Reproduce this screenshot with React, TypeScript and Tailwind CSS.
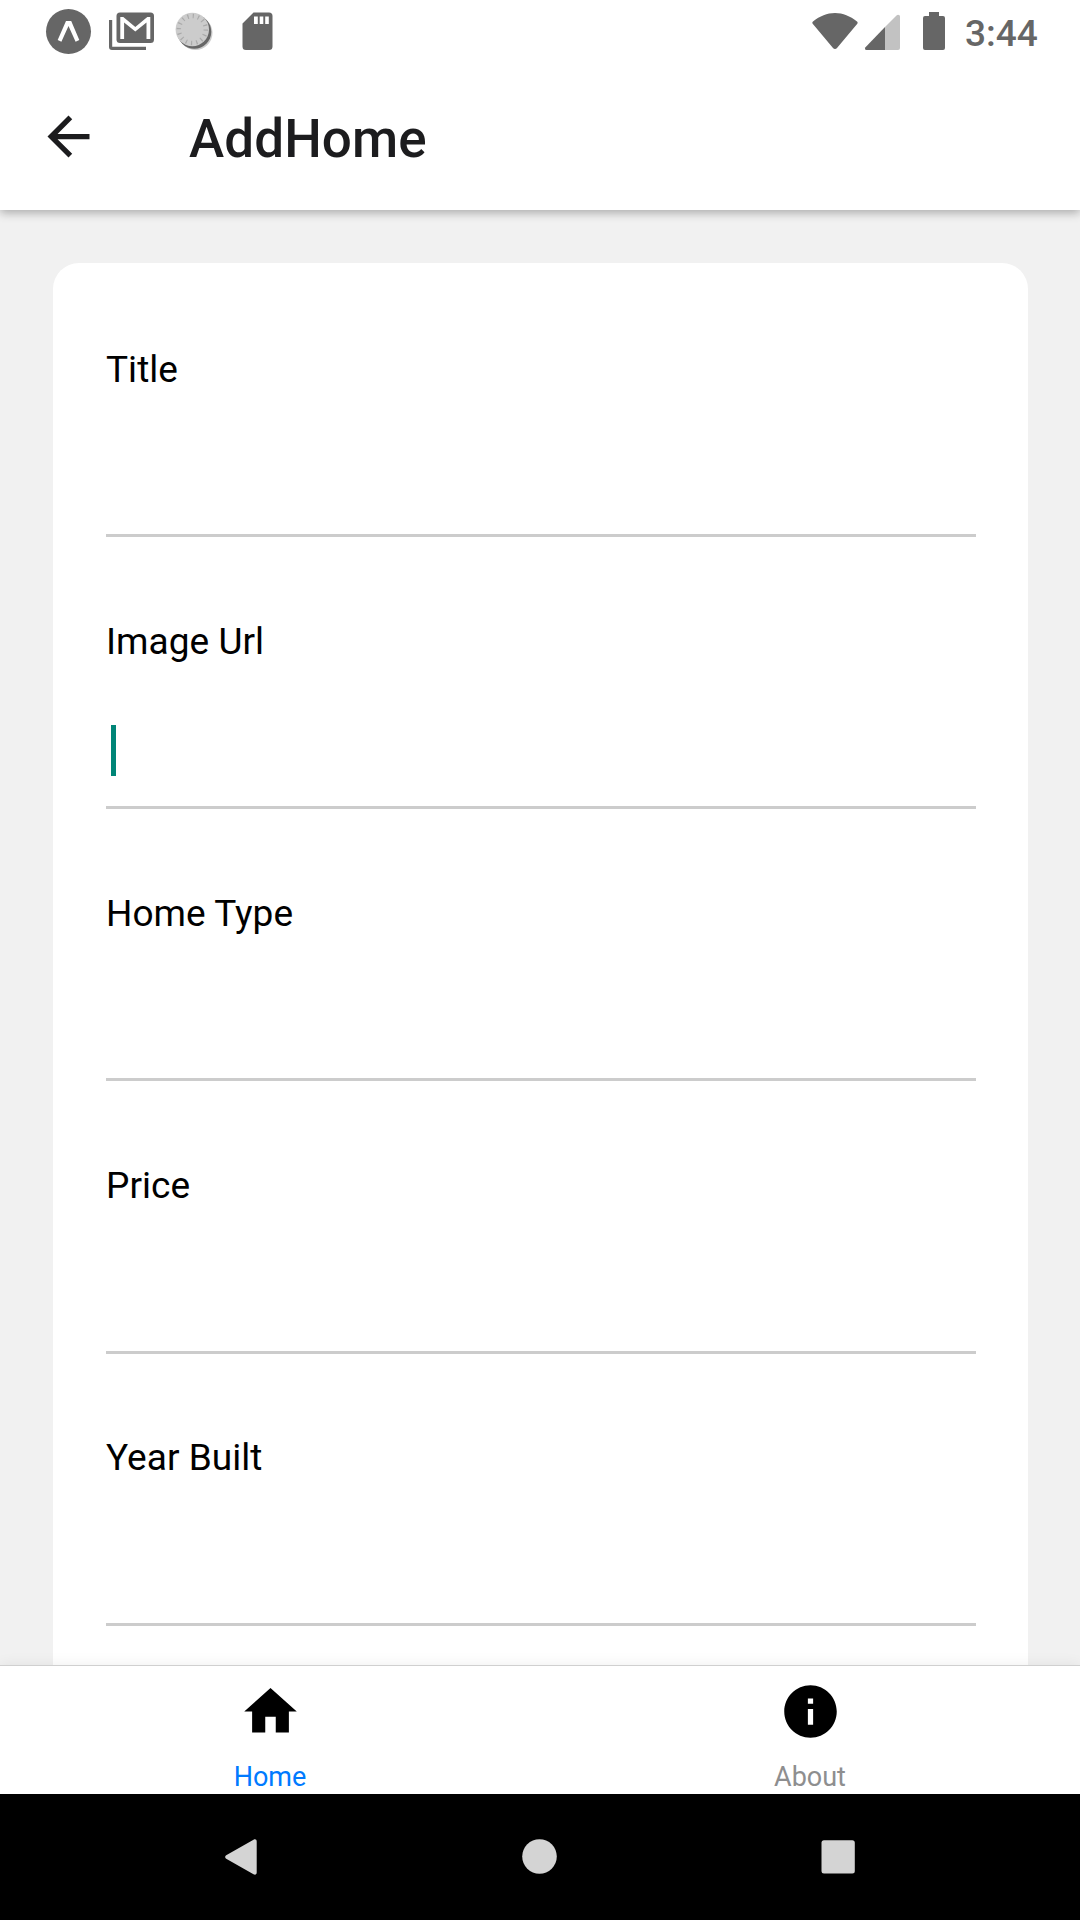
import React from "react";

const fields = ["Title", "Image Url", "Home Type", "Price", "Year Built"];

function StatusBar() {
  return (
    <div className="flex h-[63px] shrink-0 items-start justify-between">
      <svg width="300" height="63" viewBox="0 0 300 63" className="block shrink-0">
        <circle cx="68.5" cy="31.5" r="22.5" fill="#666" />
        <path d="M57.700 40L66 21h5.200L79.300 40l-3.700 1.700L68.500 26 61.400 41.700Z" fill="#fff" />
        <path d="M109 20h3.200v26.800H146V50h-34a3 3 0 0 1-3-3Z" fill="#666" />
        <rect x="116.500" y="12.500" width="37.500" height="30.500" rx="3.500" fill="#666" />
        <path d="M120.300 39V17h3l12 10 12-10h3v22h-3.800V22.500l-11.200 9-11.200-9V39Z" fill="#fff" />
        <circle cx="195.500" cy="33" r="17" fill="#ccc" />
        <circle cx="194.300" cy="31.700" r="17" fill="#666" />
        <circle cx="192.300" cy="29.500" r="16.700" fill="#ccc" />
        <circle cx="192.300" cy="29.500" r="13.500" fill="none" stroke="#aaa" strokeWidth="4.500" strokeDasharray="1.200 4.102" />
        <path d="M253.500 12.500H269a3.500 3.500 0 0 1 3.500 3.500v30.500A3.500 3.500 0 0 1 269 50h-23a3.500 3.500 0 0 1-3.500-3.500V23.500Z" fill="#666" />
        <path d="M254 16.500h3.800V24H254ZM259.700 16.500h3.600V24h-3.600ZM265.200 16.500h3.600V24h-3.600Z" fill="#fff" />
      </svg>
      <div className="flex">
        <svg width="150" height="63" viewBox="806 0 150 63" className="block shrink-0">
          <path d="M813 21.500C820 16 827 13 835 13s15 3 22 8.500c.8.700.8 1.500.3 2.200L837 48c-1 1.200-3 1.200-4 0L812.700 23.700c-.5-.7-.5-1.500.3-2.200Z" fill="#666" />
          <path d="M885 27l11.500-11.500c1.500-1.500 3.500-.5 3.500 1V48a2 2 0 0 1-2 2h-13Z" fill="#c2c2c2" />
          <path d="M885 27v23h-18.500c-1.500 0-2-1.500-1-2.800Z" fill="#666" />
          <path d="M929 12h10v4h4a2 2 0 0 1 2 2v30a2 2 0 0 1-2 2h-18a2 2 0 0 1-2-2V18a2 2 0 0 1 2-2h4Z" fill="#666" />
        </svg>
        <div className="w-[124px] pt-[10px] pl-[9px] text-[37px] leading-[48px] font-medium text-[#666]">3:44</div>
      </div>
    </div>
  );
}

function Header() {
  return (
    <header className="relative z-10 flex h-[210px] shrink-0 flex-col bg-white shadow-[0_3px_9px_rgba(0,0,0,0.29)]">
      <StatusBar />
      <div className="flex h-[147px] items-center pl-[37px]">
        <svg width="63" height="63" viewBox="0 0 24 24" fill="#1c1c1e">
          <path d="M20 11H7.830l5.590-5.590L12 4l-8 8 8 8 1.410-1.410L7.830 13H20v-2z" />
        </svg>
        <h1 className="ml-[89px] pt-[4px] text-[53px] leading-[62px] font-medium tracking-[0.1px] text-[#1c1c1e]">AddHome</h1>
      </div>
    </header>
  );
}

function Field({ label, focused }: { label: string; focused: boolean }) {
  return (
    <div className="flex h-[272.220px] flex-col border-b-[3px] border-[#ccc] pt-[79.950px]">
      <label className="text-[37px] leading-[50px] tracking-[0.040px] text-black">{label}</label>
      <div className="flex-1 pt-[58px] pl-[5px]">
        {focused && <div className="h-[51px] w-[5px] bg-[#008577]" />}
      </div>
    </div>
  );
}

function Tab({ label, color, d }: { label: string; color: string; d: string }) {
  return (
    <div className="flex flex-1 flex-col items-center pt-[14px]">
      <svg width="63" height="63" viewBox="0 0 24 24" fill="#000">
        <path d={d} />
      </svg>
      <span className={`mt-[18px] text-[27px] leading-[32px] ${color}`}>{label}</span>
    </div>
  );
}

export default function App() {
  return (
    <div className="flex h-[1920px] w-[1080px] flex-col overflow-hidden bg-[#f1f1f1] font-[Roboto,sans-serif]">
      <Header />
      <main className="min-h-0 flex-1 overflow-hidden pt-[53px] pr-[52px] pl-[53px]">
        <div className="h-[1600px] rounded-[26px] bg-white pt-[1.650px] pr-[52px] pl-[53px]">
          {fields.map((label, i) => (
            <Field key={label} label={label} focused={i === 1} />
          ))}
        </div>
      </main>
      <nav className="relative z-10 flex h-[129px] shrink-0 border-t border-[#d0d0d0] bg-white shadow-[0_0_14px_rgba(0,0,0,0.07)]">
        <Tab label="Home" color="text-[#007aff]" d="M10 20v-6h4v6h5v-8h3L12 3 2 12h3v8z" />
        <Tab label="About" color="text-[#8e8e8f]" d="M12 2C6.480 2 2 6.480 2 12s4.480 10 10 10 10-4.480 10-10S17.520 2 12 2zm1 15h-2v-6h2v6zm0-8h-2V7h2v2z" />
      </nav>
      <div className="relative z-20 h-[126px] shrink-0 bg-black">
        <svg width="1080" height="126" viewBox="0 1794 1080 126" fill="#d4d4d4" className="block">
          <path d="M226.200 1855.200l27.300-15.400c1.800-1 3.200-.2 3.200 1.700v31c0 1.900-1.400 2.700-3.200 1.700l-27.300-15.400c-1.400-1-1.400-2.600 0-3.600Z" />
          <circle cx="539.500" cy="1856.500" r="17.300" />
          <rect x="821.500" y="1840.300" width="33.300" height="33.300" rx="2.500" />
        </svg>
      </div>
    </div>
  );
}
